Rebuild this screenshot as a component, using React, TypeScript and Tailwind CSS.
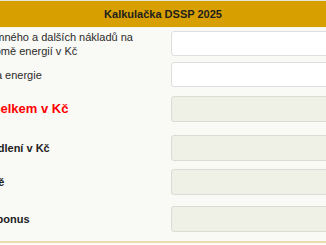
import React from "react";

type Row = {
  label: React.ReactNode;
  height: string;
  kind: "input" | "result";
  labelClass: string;
};

export default function App() {
  const rows: Row[] = [
    {
      label: (
        <>
          Výše nájemného a dalších nákladů na
          <br />
          bydlení kromě energií v Kč
        </>
      ),
      height: "h-[31px]",
      kind: "input",
      labelClass: "text-[11px] text-[#2b2b2b]",
    },
    {
      label: "Náklady na energie",
      height: "h-[31px]",
      kind: "input",
      labelClass: "text-[11px] text-[#2b2b2b]",
    },
    {
      label: "Částka celkem v Kč",
      height: "h-[38px]",
      kind: "result",
      labelClass: "text-[13px] font-bold text-[#ff0000]",
    },
    {
      label: "Složka bydlení v Kč",
      height: "h-[40px]",
      kind: "result",
      labelClass: "text-[11px] font-bold text-[#222]",
    },
    {
      label: "Složka dítě",
      height: "h-[28px]",
      kind: "result",
      labelClass: "text-[11px] font-bold text-[#222]",
    },
    {
      label: "Pracovní bonus",
      height: "h-[45px]",
      kind: "result",
      labelClass: "text-[11px] font-bold text-[#222]",
    },
  ];

  return (
    <div
      className="w-[326px] h-[245px] overflow-hidden bg-[#f9f9f5] flex justify-center"
      style={{ fontFamily: '"Liberation Sans", Arial, sans-serif' }}
    >
      <div className="w-[440px] shrink-0 flex flex-col">
        <div className="h-px bg-[#e6e3d8]" />
        <div className="h-[27px] bg-[#d79f00] border-b border-[#fbf6e6] flex items-center justify-center text-[11px] font-bold text-[#1e1e1e]">
          Kalkulačka DSSP 2025
        </div>

        {rows.map((row, i) => (
          <div key={i} className={`grid grid-cols-[224px_216px] ${row.height}`}>
            <div className={`pl-1 flex items-center leading-[14px] ${row.labelClass}`}>
              <div>{row.label}</div>
            </div>
            <div className="pl-1 pr-1 flex items-center">
              {row.kind === "input" ? (
                <input
                  type="text"
                  className="w-full h-[25px] bg-white border border-[#dedede] rounded-[3px] outline-none"
                />
              ) : (
                <input
                  type="text"
                  disabled
                  className="w-full h-[26px] bg-[#eff0e6] border border-[#dcdcd4] rounded-[3px] outline-none"
                />
              )}
            </div>
          </div>
        ))}

        <div className="h-[2px] bg-[#eadcb0]" />
        <div className="flex-1 bg-[#fdfbf3]" />
      </div>
    </div>
  );
}
